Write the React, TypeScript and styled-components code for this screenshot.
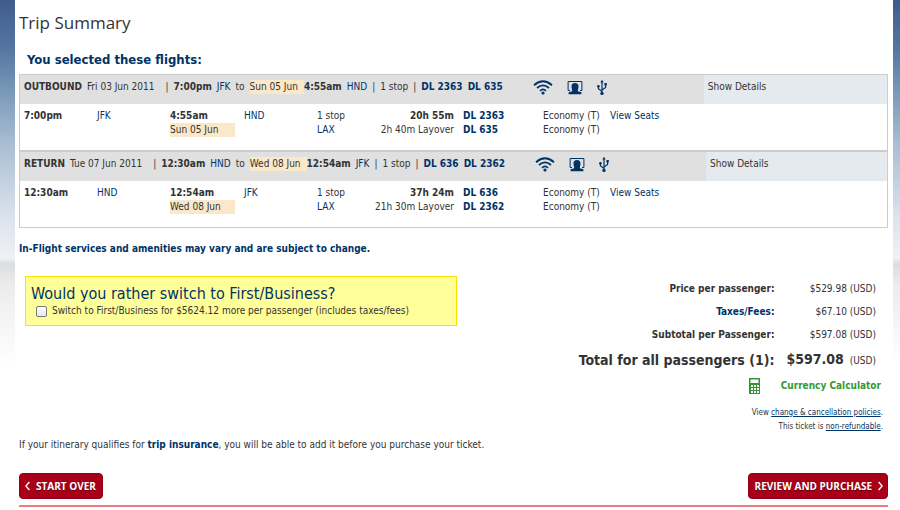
import React from "react";
import styled, { createGlobalStyle, css } from "styled-components";

const NAVY = "#003366";
const INK = "#333333";
const RULE = "#cccccc";

const GlobalStyle = createGlobalStyle`
  * { box-sizing: border-box; }
  html { min-height: 100%; background: #ffffff; }
  body {
    margin: 0;
    font-family: "DejaVu Sans Condensed", "DejaVu Sans", Tahoma, Verdana, sans-serif;
    font-stretch: condensed;
    font-size: 10px;
    line-height: 14px;
    color: ${INK};
  }
`;

const Backdrop = styled.div`
  padding: 0 7px 0 15px;
  background: linear-gradient(
    #3f5b8e 0px, #5577a2 50px, #7394b5 85px, #a9bfd3 145px, #dae2ec 215px,
    #eff1f5 258px, #dcdddf 264px, #ececec 285px, #ffffff 365px
  );
`;

const Page = styled.main`
  background: #ffffff;
  padding: 12px 5px 3px 4px;
`;

const Title = styled.h1`
  margin: 0;
  font-family: "Open Sans", "Trebuchet MS", sans-serif;
  font-stretch: normal;
  font-size: 17px;
  line-height: 22px;
  font-weight: 400;
`;

const Subtitle = styled.h2`
  margin: 17px 0 5px 8px;
  font-size: 13px;
  line-height: 18px;
  font-weight: 700;
  color: ${NAVY};
`;

const Flights = styled.section`
  border: 1px solid ${RULE};
`;

const Leg = styled.article`
  & + & { border-top: 2px solid ${RULE}; }
`;

const LegHeader = styled.header`
  display: flex;
  height: 29px;
  background: #e0e0e0;
`;

const LegSummary = styled.div`
  display: flex;
  align-items: flex-start;
  gap: 5px;
  padding: 5px 30px 0 4px;
  white-space: nowrap;
`;

const TravelDate = styled.span`
  margin-right: 6px;
`;

const Highlight = styled.span`
  background: #fbe8c8;
`;

const ArrivalTime = styled.span`
  display: flex;
  font-weight: 700;
`;

const ArrivalDate = styled(Highlight)`
  padding-right: 6px;
  font-weight: 400;
`;

const DateChip = styled(Highlight)`
  display: block;
  width: 65px;
`;

const Amenities = styled.div`
  display: flex;
  gap: 14px;
  padding: 4px 97px 0 0;
  color: ${NAVY};
`;

const Details = styled.div`
  flex: 1;
  padding: 5px 4px 0;
  background: #e5eaee;
`;

const PlainButton = styled.button`
  padding: 0;
  border: 0;
  background: none;
  font: inherit;
  color: inherit;
  cursor: pointer;
`;

const LegTable = styled.table`
  width: 100%;
  height: 46px;
  table-layout: fixed;
  border-collapse: collapse;
`;

const Cell = styled.td<{ $right?: boolean }>`
  padding: 5px 0 13px 4px;
  vertical-align: top;
  white-space: nowrap;
  ${(p) => p.$right && css`
    padding-right: 5px;
    text-align: right;
  `}
`;

const Line = styled.div`
  height: 14px;
`;

const Navy = styled.span`
  color: ${NAVY};
`;

const NavyLink = styled.a<{ $bold?: boolean; $underline?: boolean }>`
  color: ${NAVY};
  font-weight: ${(p) => (p.$bold ? 700 : 400)};
  text-decoration: ${(p) => (p.$underline ? "underline" : "none")};
`;

const Notice = styled.p`
  margin: 14px 0 20px;
  font-weight: 700;
  color: ${NAVY};
`;

const OfferRow = styled.div`
  display: flex;
  justify-content: space-between;
  align-items: flex-start;
`;

const Offer = styled.section`
  flex: 0 1 432px;
  margin: 0 0 0 6px;
  padding: 7px 5px;
  border: 1px solid #ffe000;
  background: #ffff99;
`;

const OfferTitle = styled.h2`
  margin: 0;
  font-size: 16px;
  line-height: 20px;
  font-weight: 400;
  color: ${NAVY};
`;

const OfferLabel = styled.label`
  display: flex;
  align-items: center;
  gap: 5px;
  padding-left: 5px;
`;

const Check = styled.input`
  appearance: none;
  width: 11px;
  height: 11px;
  margin: 0;
  border: 1px solid #777777;
  border-radius: 2px;
  background: linear-gradient(#ffffff, #e8e8e8);
  &:checked { background: ${NAVY}; }
`;

const Prices = styled.section`
  display: flex;
  flex-direction: column;
  align-items: flex-end;
  padding: 1px 5px 0 0;
`;

const PriceTable = styled.table`
  margin-right: 7px;
  border-collapse: collapse;
  text-align: right;
  white-space: nowrap;
`;

const PriceLabel = styled.th<{ $total?: boolean }>`
  height: ${(p) => (p.$total ? 28 : 23)}px;
  padding: 0;
  font-weight: 700;
  font-size: ${(p) => (p.$total ? 14 : 10)}px;
`;

const Price = styled.td`
  padding: 0 0 0 12px;
`;

const Total = styled.strong`
  margin-right: 3px;
  font-size: 14px;
`;

const Calculator = styled.a`
  display: flex;
  align-items: center;
  gap: 21px;
  margin: 4px 2px 12px 0;
  font-weight: 700;
  color: #339933;
  text-decoration: none;
`;

const Policy = styled.p`
  margin: 0;
  font-size: 8px;
  line-height: 14px;
`;

const Insurance = styled.p`
  margin: 4px 0 21px;
`;

const Actions = styled.nav`
  display: flex;
  justify-content: space-between;
  padding-bottom: 6px;
  border-bottom: 2px solid #f07a88;
`;

const RedButton = styled.button<{ $forward?: boolean }>`
  display: flex;
  align-items: center;
  gap: 6px;
  height: 26px;
  padding: ${(p) => (p.$forward ? "0 4px 0 6px" : "0 6px 0 5px")};
  border: 1px solid #900018;
  border-radius: 4px;
  background: #a90019;
  font-family: "Open Sans", Tahoma, sans-serif;
  font-size: 10px;
  font-weight: 700;
  color: #ffffff;
  text-shadow: 0 1px 1px #600010;
  cursor: pointer;
`;

const WifiIcon = () => (
  <svg width="20" height="17" viewBox="0 0 20 17" fill="none" stroke="currentColor" strokeWidth="1.8" aria-label="Wi-Fi">
    <path d="M1 6.2Q10 -1.6 19 6.2" />
    <path d="M4 9Q10 3.8 16 9" />
    <path d="M7 11.8Q10 9 13 11.8" />
    <circle cx="10" cy="14" r="1.6" fill="currentColor" stroke="none" />
  </svg>
);

const ScreenIcon = () => (
  <svg width="16" height="17" viewBox="0 0 16 17" fill="none" aria-label="Seat-back entertainment">
    <path d="M3 11.5H1.1V2.5H14.9V11.5H13" stroke="currentColor" strokeWidth="1" />
    <path d="M8 4C10.3 4 11.6 5.3 11.5 7.6C11.5 9.4 10.9 10.2 10.8 12.2L14.4 13.2V15.2H1.6V13.2L5.2 12.2C5.1 10.2 4.5 9.4 4.5 7.6C4.4 5.3 5.7 4 8 4Z" fill="currentColor" />
  </svg>
);

const UsbIcon = () => (
  <svg width="10" height="17" viewBox="0 0 10 17" fill="none" stroke="currentColor" strokeWidth="1.2" aria-label="USB power">
    <path d="M5 15V2.5M5 12.5L1.4 9.8V7.2M5 11L8.6 8.4V5" />
    <path d="M5 0.8L6.6 3.6H3.4Z" fill="currentColor" stroke="none" />
    <circle cx="1.4" cy="7.2" r="1.3" fill="currentColor" stroke="none" />
    <path d="M7.4 4H9.8V6.4H7.4Z" fill="currentColor" stroke="none" />
    <circle cx="5" cy="14.4" r="1.7" fill="currentColor" stroke="none" />
  </svg>
);

const CalculatorIcon = () => (
  <svg width="11" height="16" viewBox="0 0 11 16" aria-hidden="true">
    <path d="M0 0H11V16H0Z" fill="#339933" />
    <path d="M1.5 1.5H9.5V5H1.5Z" fill="#ffffff" />
    <path
      d="M2 7H4V9H2ZM5 7H7V9H5ZM8 7H10V9H8ZM2 10H4V12H2ZM5 10H7V12H5ZM8 10H10V12H8ZM2 13H4V15H2ZM5 13H7V15H5ZM8 13H10V15H8Z"
      fill="#ffffff"
    />
  </svg>
);

const Chevron = ({ left }: { left?: boolean }) => (
  <svg width="5" height="10" viewBox="0 0 5 10" fill="none" stroke="#ffffff" strokeWidth="1.3" aria-hidden="true">
    <path d={left ? "M4.4 1L0.9 5L4.4 9" : "M0.6 1L4.1 5L0.6 9"} />
  </svg>
);

interface LegData {
  name: string;
  date: string;
  depart: string;
  from: string;
  arriveDate: string;
  arrive: string;
  to: string;
  duration: string;
  layover: string;
  flights: [string, string];
}

const legs: LegData[] = [
  {
    name: "OUTBOUND", date: "Fri 03 Jun 2011", depart: "7:00pm", from: "JFK",
    arriveDate: "Sun 05 Jun", arrive: "4:55am", to: "HND",
    duration: "20h 55m", layover: "2h 40m Layover", flights: ["DL 2363", "DL 635"],
  },
  {
    name: "RETURN", date: "Tue 07 Jun 2011", depart: "12:30am", from: "HND",
    arriveDate: "Wed 08 Jun", arrive: "12:54am", to: "JFK",
    duration: "37h 24m", layover: "21h 30m Layover", flights: ["DL 636", "DL 2362"],
  },
];

const FlightLeg = ({ leg }: { leg: LegData }) => (
  <Leg>
    <LegHeader>
      <LegSummary>
        <b>{leg.name}</b>
        <TravelDate>{leg.date}</TravelDate>
        <span>|</span>
        <b>{leg.depart}</b>
        <Navy>{leg.from}</Navy>
        <span>to</span>
        <ArrivalTime>
          <ArrivalDate>{leg.arriveDate}</ArrivalDate>
          {leg.arrive}
        </ArrivalTime>
        <Navy>{leg.to}</Navy>
        <span>|</span>
        <span>1 stop</span>
        <span>|</span>
        <NavyLink $bold href="#flight">{leg.flights[0]}</NavyLink>
        <NavyLink $bold href="#flight">{leg.flights[1]}</NavyLink>
      </LegSummary>
      <Amenities>
        <WifiIcon />
        <ScreenIcon />
        <UsbIcon />
      </Amenities>
      <Details>
        <PlainButton type="button">Show Details</PlainButton>
      </Details>
    </LegHeader>
    <LegTable>
      <colgroup>
        <col width="73" />
        <col width="73" />
        <col width="74" />
        <col width="73" />
        <col width="50" />
        <col width="96" />
        <col width="80" />
        <col width="67" />
        <col />
      </colgroup>
      <tbody>
        <tr>
          <Cell><b>{leg.depart}</b></Cell>
          <Cell><Navy>{leg.from}</Navy></Cell>
          <Cell>
            <Line><b>{leg.arrive}</b></Line>
            <DateChip>{leg.arriveDate}</DateChip>
          </Cell>
          <Cell><Navy>{leg.to}</Navy></Cell>
          <Cell>
            <Line>1 stop</Line>
            <Line><Navy>LAX</Navy></Line>
          </Cell>
          <Cell $right>
            <Line><b>{leg.duration}</b></Line>
            <Line>{leg.layover}</Line>
          </Cell>
          <Cell>
            {leg.flights.map((f) => (
              <Line key={f}><NavyLink $bold href="#flight">{f}</NavyLink></Line>
            ))}
          </Cell>
          <Cell>
            <Line>Economy (T)</Line>
            <Line>Economy (T)</Line>
          </Cell>
          <Cell><NavyLink href="#seats">View Seats</NavyLink></Cell>
        </tr>
      </tbody>
    </LegTable>
  </Leg>
);

export default function App() {
  return (
    <>
      <GlobalStyle />
      <Backdrop>
        <Page>
          <Title>Trip Summary</Title>
          <Subtitle>You selected these flights:</Subtitle>
          <Flights>
            {legs.map((leg) => <FlightLeg key={leg.name} leg={leg} />)}
          </Flights>
          <Notice>In-Flight services and amenities may vary and are subject to change.</Notice>
          <OfferRow>
            <Offer>
              <OfferTitle>Would you rather switch to First/Business?</OfferTitle>
              <OfferLabel>
                <Check type="checkbox" />
                Switch to First/Business for $5624.12 more per passenger (includes taxes/fees)
              </OfferLabel>
            </Offer>
            <Prices>
              <PriceTable>
                <tbody>
                  <tr>
                    <PriceLabel scope="row">Price per passenger:</PriceLabel>
                    <Price>$529.98 (USD)</Price>
                  </tr>
                  <tr>
                    <PriceLabel scope="row"><NavyLink $bold href="#taxes">Taxes/Fees:</NavyLink></PriceLabel>
                    <Price>$67.10 (USD)</Price>
                  </tr>
                  <tr>
                    <PriceLabel scope="row">Subtotal per Passenger:</PriceLabel>
                    <Price>$597.08 (USD)</Price>
                  </tr>
                  <tr>
                    <PriceLabel scope="row" $total>Total for all passengers (1):</PriceLabel>
                    <Price><Total>$597.08</Total> (USD)</Price>
                  </tr>
                </tbody>
              </PriceTable>
              <Calculator href="#currency"><CalculatorIcon />Currency Calculator</Calculator>
              <Policy>View <NavyLink $underline href="#policies">change &amp; cancellation policies</NavyLink>.</Policy>
              <Policy>This ticket is <NavyLink $underline href="#refunds">non-refundable</NavyLink>.</Policy>
            </Prices>
          </OfferRow>
          <Insurance>
            If your itinerary qualifies for <NavyLink $bold href="#insurance">trip insurance</NavyLink>, you will be
            able to add it before you purchase your ticket.
          </Insurance>
          <Actions>
            <RedButton type="button"><Chevron left />START OVER</RedButton>
            <RedButton type="button" $forward>REVIEW AND PURCHASE<Chevron /></RedButton>
          </Actions>
        </Page>
      </Backdrop>
    </>
  );
}
